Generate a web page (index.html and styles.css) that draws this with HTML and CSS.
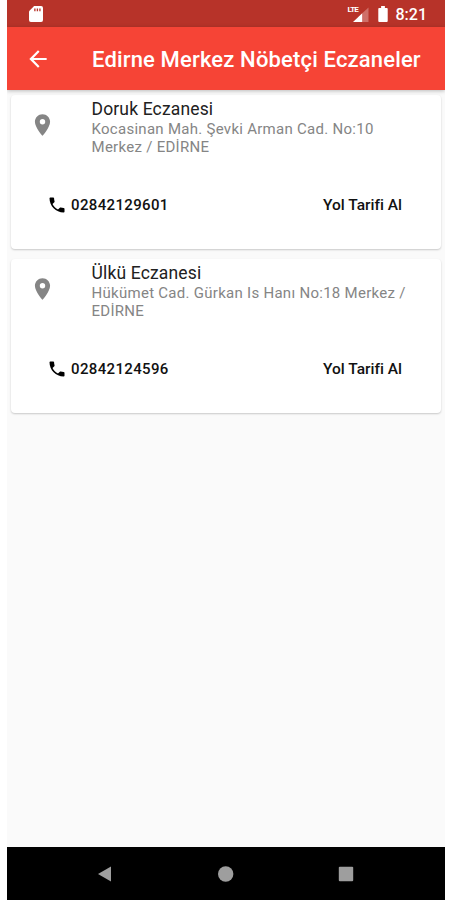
FILE: index.html
```html
<!DOCTYPE html>
<html lang="tr">
<head>
    <meta charset="UTF-8">
    <meta name="viewport" content="width=device-width, initial-scale=1.0">
    <title>Nöbetçi Eczaneler</title>
    <link rel="stylesheet" href="styles.css">
</head>
<body>
    <div class="screen">
        <div class="status-bar">
            <svg class="sd-icon" width="14" height="16" viewBox="0 0 15 17"><path fill="#fff" d="M5.5 0H13a2 2 0 0 1 2 2v13a2 2 0 0 1-2 2H2a2 2 0 0 1-2-2V5.5z"/><path stroke="#b73329" stroke-width="1.4" d="M6.3 2.5v3M9 2.5v3M11.7 2.5v3"/></svg>
            <div class="status-right">
                <div class="signal">
                    <svg width="21" height="17" viewBox="0 0 21 17"><path fill="#fff" d="M5 16L14.5 7v9z"/><path fill="#cf6f68" d="M14.5 7L20.5 1.5v14.5h-6z"/></svg>
                    <span class="lte">LTE</span>
                </div>
                <svg class="battery" width="10" height="16" viewBox="0 0 10 17"><path fill="#fff" d="M3 0h4v2h2a1 1 0 0 1 1 1v13a1 1 0 0 1-1 1H1a1 1 0 0 1-1-1V3a1 1 0 0 1 1-1h2z"/></svg>
                <span class="clock">8:21</span>
            </div>
        </div>

        <header class="app-bar">
            <svg class="back" width="26" height="26" viewBox="0 0 24 24"><path fill="#fff" d="M20 11H7.83l5.59-5.59L12 4l-8 8 8 8 1.41-1.41L7.83 13H20v-2z"/></svg>
            <h1>Edirne Merkez Nöbetçi Eczaneler</h1>
        </header>

        <main class="list">
            <div class="card">
                <div class="info">
                    <svg class="pin" width="27" height="26" viewBox="0 0 24 24"><path fill="#858585" d="M12 2C8.13 2 5 5.13 5 9c0 5.25 7 13 7 13s7-7.75 7-13c0-3.87-3.13-7-7-7zm0 9.5a2.5 2.5 0 0 1 0-5 2.5 2.5 0 0 1 0 5z"/></svg>
                    <div>
                        <h2>Doruk Eczanesi</h2>
                        <p>Kocasinan Mah. Şevki Arman Cad. No:10<br>Merkez / EDİRNE</p>
                    </div>
                </div>
                <div class="actions">
                    <div class="phone">
                        <svg width="20" height="20" viewBox="0 0 24 24"><path d="M6.62 10.79c1.44 2.83 3.76 5.14 6.59 6.59l2.2-2.2c.27-.27.67-.36 1.02-.24 1.12.37 2.33.57 3.57.57.55 0 1 .45 1 1V20c0 .55-.45 1-1 1-9.39 0-17-7.61-17-17 0-.55.45-1 1-1h3.5c.55 0 1 .45 1 1 0 1.25.2 2.45.57 3.57.11.35.03.74-.25 1.02l-2.2 2.2z"/></svg>
                        <span>02842129601</span>
                    </div>
                    <span class="route">Yol Tarifi Al</span>
                </div>
            </div>

            <div class="card">
                <div class="info">
                    <svg class="pin" width="27" height="26" viewBox="0 0 24 24"><path fill="#858585" d="M12 2C8.13 2 5 5.13 5 9c0 5.25 7 13 7 13s7-7.75 7-13c0-3.87-3.13-7-7-7zm0 9.5a2.5 2.5 0 0 1 0-5 2.5 2.5 0 0 1 0 5z"/></svg>
                    <div>
                        <h2>Ülkü Eczanesi</h2>
                        <p>Hükümet Cad. Gürkan Is Hanı No:18 Merkez /<br>EDİRNE</p>
                    </div>
                </div>
                <div class="actions">
                    <div class="phone">
                        <svg width="20" height="20" viewBox="0 0 24 24"><path d="M6.62 10.79c1.44 2.83 3.76 5.14 6.59 6.59l2.2-2.2c.27-.27.67-.36 1.02-.24 1.12.37 2.33.57 3.57.57.55 0 1 .45 1 1V20c0 .55-.45 1-1 1-9.39 0-17-7.61-17-17 0-.55.45-1 1-1h3.5c.55 0 1 .45 1 1 0 1.25.2 2.45.57 3.57.11.35.03.74-.25 1.02l-2.2 2.2z"/></svg>
                        <span>02842124596</span>
                    </div>
                    <span class="route">Yol Tarifi Al</span>
                </div>
            </div>
        </main>

        <nav class="nav-bar">
            <svg width="16" height="16" viewBox="0 0 16 16"><path fill="#9e9e9e" d="M1 8L14 .5v15z"/></svg>
            <svg width="16" height="16" viewBox="0 0 16 16"><circle fill="#9e9e9e" cx="7.7" cy="8" r="7.7"/></svg>
            <svg width="16" height="16" viewBox="0 0 16 16"><rect fill="#9e9e9e" x=".8" y=".8" width="14.4" height="14.4" rx="1"/></svg>
        </nav>
    </div>
</body>
</html>
```
FILE: styles.css
```css
* {
    box-sizing: border-box;
    margin: 0;
    padding: 0;
}
body {
    background-color: #fff;
    font-family: Roboto, "Noto Sans", sans-serif;
}
svg {
    display: block;
    flex-shrink: 0;
}
.screen {
    display: flex;
    flex-direction: column;
    width: 438px;
    height: 900px;
    margin-left: 7px;
    background-color: #fafafa;
    overflow: hidden;
}
.status-bar {
    display: flex;
    justify-content: space-between;
    align-items: center;
    height: 27px;
    padding: 1px 18px 0 22px;
    background-color: #b73329;
}
.status-right {
    display: flex;
    align-items: center;
}
.signal {
    position: relative;
    margin-right: 9px;
}
.lte {
    position: absolute;
    left: 0;
    top: -1px;
    color: #fff;
    font-size: 8px;
    font-weight: 700;
    line-height: 9px;
    letter-spacing: -0.8px;
}
.battery {
    margin-right: 8px;
}
.clock {
    padding-top: 1px;
    color: #fff;
    font-size: 16px;
    font-weight: 500;
    line-height: 20px;
}
.app-bar {
    display: flex;
    align-items: center;
    height: 63px;
    padding-left: 18px;
    background-color: #f64436;
    box-shadow: 0 1px 4px rgba(0, 0, 0, 0.25);
    z-index: 1;
}
.app-bar h1 {
    margin-left: 41px;
    padding-top: 2px;
    color: #fff;
    font-size: 22px;
    font-weight: 500;
    line-height: 28px;
    letter-spacing: 0.16px;
    white-space: nowrap;
}
.list {
    flex: 1;
    display: flex;
    flex-direction: column;
    gap: 10px;
    padding: 5px 4px 0;
}
.card {
    height: 154px;
    background-color: #fff;
    border-radius: 4px;
    box-shadow: 0 1px 2px rgba(0, 0, 0, 0.2);
}
.info {
    display: flex;
    height: 86px;
    padding: 4px 0 0 18px;
}
.pin {
    margin: 13px 35.5px 0 0;
}
.info h2 {
    color: #212121;
    font-size: 17.5px;
    font-weight: 400;
    line-height: 21px;
    letter-spacing: 0.15px;
}
.info p {
    color: #858585;
    font-size: 15px;
    line-height: 18px;
    letter-spacing: 0.28px;
    white-space: nowrap;
}
.actions {
    display: flex;
    justify-content: space-between;
    align-items: center;
    height: 48px;
    padding: 0 39px 0 36px;
    color: #111;
    font-size: 15px;
    font-weight: 500;
}
.phone {
    display: flex;
    align-items: center;
    gap: 4px;
    letter-spacing: 0.35px;
}
.route {
    font-size: 15.5px;
}
.nav-bar {
    display: flex;
    justify-content: space-between;
    align-items: center;
    height: 53px;
    padding: 0 91px 0 90px;
    background-color: #000;
}
```
